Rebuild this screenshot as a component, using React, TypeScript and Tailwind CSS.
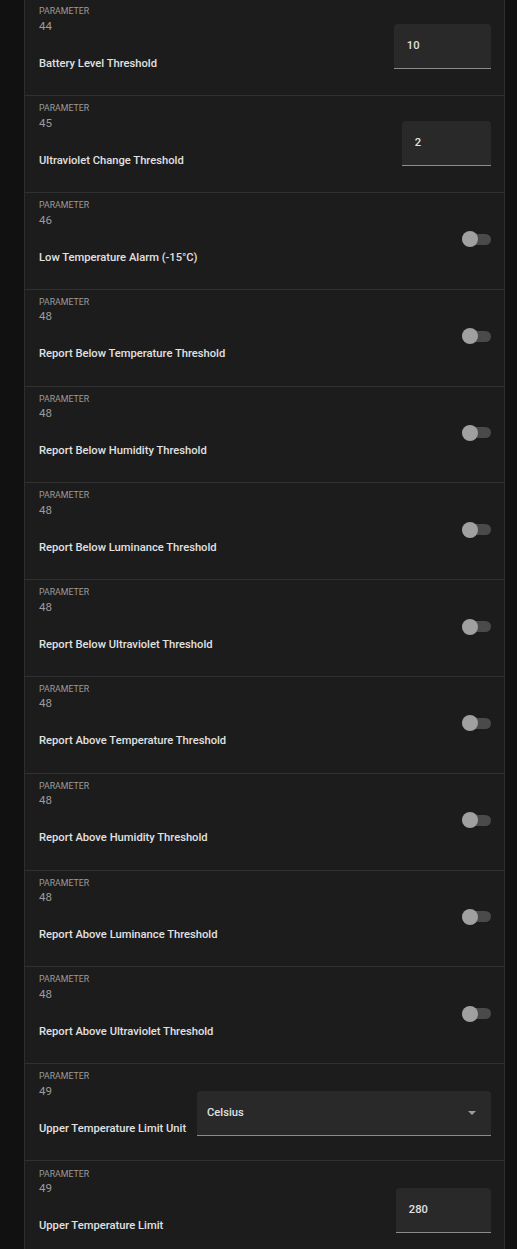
import React from "react";

type Base = { n: number; label: string; pad: string };
type Row =
  | (Base & { kind: "input"; value: string; w: string })
  | (Base & { kind: "toggle" })
  | (Base & { kind: "select"; value: string });

const T = "pb-[3px]";

const rows: Row[] = [
  { n: 44, label: "Battery Level Threshold", kind: "input", value: "10", w: "w-[97px]", pad: "pb-[1px]" },
  { n: 45, label: "Ultraviolet Change Threshold", kind: "input", value: "2", w: "w-[89px]", pad: "pb-[1px]" },
  { n: 46, label: "Low Temperature Alarm (-15°C)", kind: "toggle", pad: T },
  { n: 48, label: "Report Below Temperature Threshold", kind: "toggle", pad: T },
  { n: 48, label: "Report Below Humidity Threshold", kind: "toggle", pad: T },
  { n: 48, label: "Report Below Luminance Threshold", kind: "toggle", pad: T },
  { n: 48, label: "Report Below Ultraviolet Threshold", kind: "toggle", pad: T },
  { n: 48, label: "Report Above Temperature Threshold", kind: "toggle", pad: T },
  { n: 48, label: "Report Above Humidity Threshold", kind: "toggle", pad: T },
  { n: 48, label: "Report Above Luminance Threshold", kind: "toggle", pad: T },
  { n: 48, label: "Report Above Ultraviolet Threshold", kind: "toggle", pad: T },
  { n: 49, label: "Upper Temperature Limit Unit", kind: "select", value: "Celsius", pad: "pt-[3px]" },
  { n: 49, label: "Upper Temperature Limit", kind: "input", value: "280", w: "w-[95px]", pad: "pt-[4px]" },
];

function Toggle() {
  return (
    <div className="relative w-[29px] h-[16px] flex items-center">
      <div className="w-[29px] h-[11px] rounded-full bg-[#4a4a4a]" />
      <div className="absolute left-0 top-0 w-[16px] h-[16px] rounded-full bg-[#a0a0a0]" />
    </div>
  );
}

function Control({ row }: { row: Row }) {
  if (row.kind === "toggle") return <Toggle />;
  if (row.kind === "select")
    return (
      <div className="w-[294px] h-[45px] bg-[#292929] rounded-t-[4px] border-b border-[#8c8c8c] flex items-center justify-between pl-[10px] pr-[15px]">
        <span className="text-[11.2px] font-medium text-[#e1e1e1]">{row.value}</span>
        <svg width="8" height="4" viewBox="0 0 8 4">
          <path d="M0 0 L8 0 L4 4 Z" fill="#9e9e9e" />
        </svg>
      </div>
    );
  return (
    <div className={`${row.w} h-[45px] bg-[#292929] rounded-t-[4px] border-b border-[#8c8c8c] flex items-center pl-[12.8px]`}>
      <span className="text-[11.2px] font-medium text-[#e1e1e1]">{row.value}</span>
    </div>
  );
}

export default function App() {
  return (
    <div className="w-full min-h-screen bg-[#111111] pl-[24px] pr-[12px] font-['Roboto',sans-serif] overflow-hidden">
      <div className="bg-[#1c1c1c] border-x border-[#2e2e2e] -mt-[0.6px]">
        {rows.map((row, i) => (
          <div
            key={i}
            className={`relative h-[96.8px] border-b border-[#303030] pl-[14px] pr-[13px] flex items-center justify-between ${row.pad}`}
          >
            <div className="self-start flex flex-col">
              <div className={row.pad === T || row.pad === "pb-[1px]" ? "pt-[6px]" : "pt-[6px] -mt-[3px]"} />
              <span className="text-[8.8px] leading-[12px] uppercase text-[#9b9b9b]">Parameter</span>
              <span className="text-[11.5px] leading-[16px] mt-[0.5px] text-[#9b9b9b]">{row.n}</span>
              <span className="text-[11.2px] leading-[16px] mt-[22px] font-medium text-[#e1e1e1] whitespace-nowrap">
                {row.label}
              </span>
            </div>
            <Control row={row} />
          </div>
        ))}
      </div>
    </div>
  );
}
